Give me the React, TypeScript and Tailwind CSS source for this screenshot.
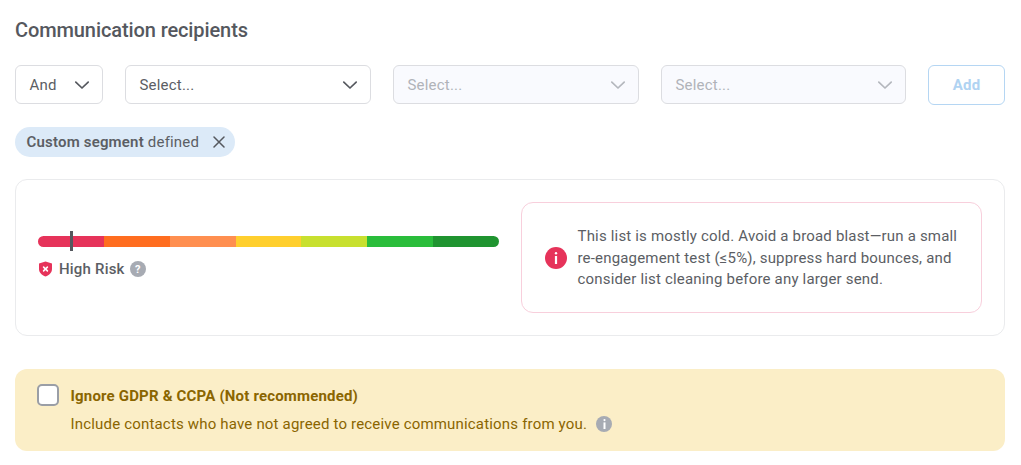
import React from 'react';

const riskColors = ['#e6335a', '#ff6d1f', '#ff8f50', '#ffcf2e', '#c8e02f', '#2abd3b', '#1f9430'];

const Chevron = ({ disabled }: { disabled?: boolean }) => (
  <svg width="16" height="16" viewBox="0 0 16 16" fill="none" className="shrink-0">
    <path
      d="M1.8 5.2 8 11 14.2 5.2"
      stroke={disabled ? '#b4b7bd' : '#55585e'}
      strokeWidth="1.7"
      strokeLinecap="round"
      strokeLinejoin="round"
    />
  </svg>
);

const SelectBox = ({ label, disabled, className }: { label: string; disabled?: boolean; className: string }) => (
  <div
    className={`flex h-[39px] items-center justify-between rounded-md border border-[#dcdde1] pl-[13.5px] pr-[12px] text-[15px] tracking-[0.2px] ${
      disabled ? 'bg-[#f9fafe] text-[#b0b3b9]' : 'bg-white text-[#5b5e64]'
    } ${className}`}
  >
    <span className="pt-[1px]">{label}</span>
    <Chevron disabled={disabled} />
  </div>
);

export default function App() {
  return (
    <div className="h-[465px] w-[1021px] overflow-hidden bg-white pl-[15px] pr-4 pt-[18px] font-['Roboto',sans-serif] text-[#5b5e64]">
      <h2 className="text-[20px] font-medium leading-6 tracking-[-0.1px] text-[#55585e]">Communication recipients</h2>

      {/* filtros */}
      <div className="mt-[23px] flex items-start gap-[22px]">
        <SelectBox label="And" className="w-[88px]" />
        <SelectBox label="Select..." className="w-[246px]" />
        <SelectBox label="Select..." disabled className="w-[246px]" />
        <SelectBox label="Select..." disabled className="w-[245px]" />
        <button className="h-10 w-[77px] rounded-md border border-[#b5d6f3] bg-white text-[15px] font-bold tracking-[0.2px] text-[#b0d3f2]">
          Add
        </button>
      </div>

      {/* chip */}
      <div className="mt-[22px] flex h-[30px] w-[220px] items-center rounded-full bg-[#dceaf8] pl-[11.5px] text-[15px] tracking-[0.18px] text-[#5b5e64]">
        <span className="font-semibold">Custom segment</span>
        <span className="ml-1">defined</span>
        <svg width="12" height="12" viewBox="0 0 12 12" fill="none" className="ml-[13.5px] shrink-0">
          <path d="M1 1 11 11M11 1 1 11" stroke="#55585e" strokeWidth="1.5" strokeLinecap="round" />
        </svg>
      </div>

      {/* riesgo */}
      <div className="mt-[22px] flex h-[157px] w-[990px] items-center justify-between rounded-xl border border-[#eaebed] pl-[22px] pr-[22px]">
        <div className="w-[461px] pt-[1px]">
          <div className="relative">
            <div className="flex h-[11px] overflow-hidden rounded-full">
              {riskColors.map(color => (
                <div key={color} className="flex-1" style={{ backgroundColor: color }} />
              ))}
            </div>
            <div className="absolute left-[32px] top-[-5px] h-[20px] w-[3px] bg-[#55585e]" />
          </div>
          <div className="mt-[11px] flex items-center">
            <svg width="15" height="16" viewBox="0 0 15 16" className="shrink-0">
              <path d="M7.5 0.5 14 2.5V8c0 3.6-2.7 6.2-6.5 7.5C3.7 14.2 1 11.6 1 8V2.5Z" fill="#e6335a" />
              <path d="M5.6 6.1 9.4 9.9M9.4 6.1 5.6 9.9" stroke="#fff" strokeWidth="1.6" strokeLinecap="round" />
            </svg>
            <span className="ml-[6px] text-[15px] font-medium tracking-[0.2px] text-[#5b5e64]">High Risk</span>
            <span className="ml-[5px] flex h-4 w-4 items-center justify-center rounded-full bg-[#a7abb3] text-[11px] font-bold leading-none text-white">
              ?
            </span>
          </div>
        </div>

        <div className="flex h-[111px] w-[461px] items-center rounded-xl border border-[#f8cfdc] pl-[23px] pr-4">
          <span className="flex h-[22px] w-[22px] shrink-0 items-center justify-center rounded-full bg-[#e6335a]">
            <svg width="4" height="12" viewBox="0 0 4 12">
              <rect x="0.8" y="0" width="2.4" height="2.4" rx="1.2" fill="#fff" />
              <rect x="0.9" y="4" width="2.2" height="8" fill="#fff" />
            </svg>
          </span>
          <p className="ml-[10.5px] pt-[2px] text-[15px] leading-[21.5px] tracking-[0.18px] text-[#5b5e64]">
            This list is mostly cold. Avoid a broad blast—run a small re-engagement test (≤5%), suppress hard bounces,
            and consider list cleaning before any larger send.
          </p>
        </div>
      </div>

      {/* aviso GDPR */}
      <div className="mt-[33px] flex h-[82px] w-[990px] items-start rounded-xl bg-[#fbeec7] pl-[22px] pt-[15px]">
        <div className="h-[22px] w-[22px] shrink-0 rounded-[5px] border-2 border-[#9a9ea6] bg-white" />
        <div className="ml-[11.5px] pt-[1px]">
          <div className="text-[15px] font-bold leading-[22px] tracking-[0.18px] text-[#8a6500]">
            Ignore GDPR &amp; CCPA (Not recommended)
          </div>
          <div className="mt-[6px] flex items-center text-[15px] leading-[22px] tracking-[0.18px] text-[#8a6500]">
            <span>Include contacts who have not agreed to receive communications from you.</span>
            <span className="ml-[9px] flex h-4 w-4 items-center justify-center rounded-full bg-[#a7abb3]">
              <svg width="3" height="10" viewBox="0 0 3 10">
                <rect x="0.4" y="0" width="2.2" height="2.2" rx="1.1" fill="#fff" />
                <rect x="0.5" y="3.4" width="2" height="6.6" fill="#fff" />
              </svg>
            </span>
          </div>
        </div>
      </div>
    </div>
  );
}
